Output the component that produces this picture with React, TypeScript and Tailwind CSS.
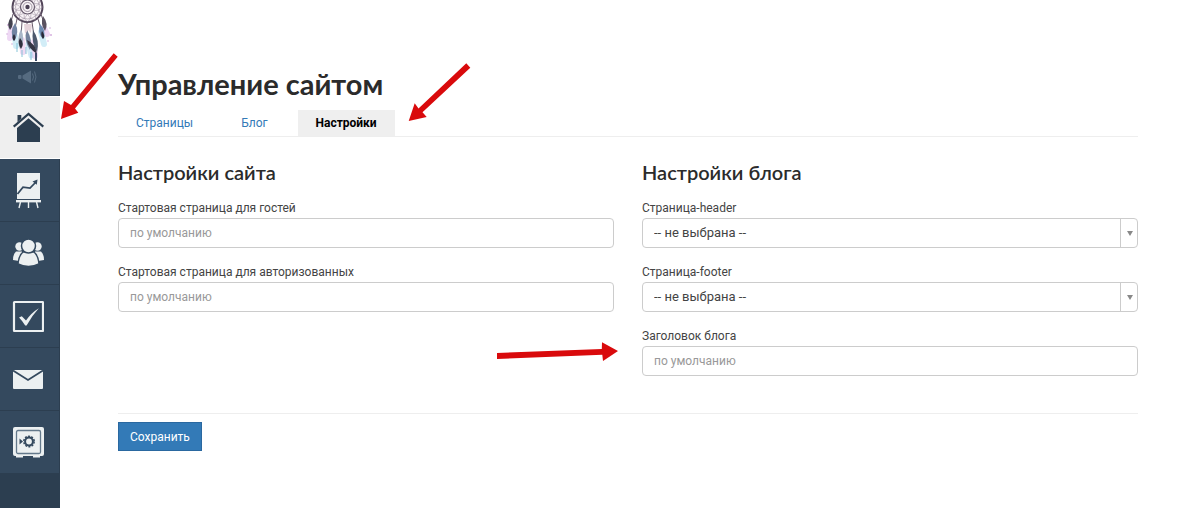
import { useState } from 'react';
import type { ReactNode } from 'react';

function Dreamcatcher() {
  const spokes = [0, 30, 60, 90, 120, 150, 180, 210, 240, 270, 300, 330];
  return (
    <svg viewBox="0 0 60 62" className="h-full w-full">
      <g fill="none" strokeLinecap="round">
        <path d="M11 29l-1 9M44 28l3 6" stroke="#cf8fe0" strokeWidth="6" opacity=".35" />
        <path d="M15 36l1 10M41 32l3 12" stroke="#8fd3ea" strokeWidth="6" opacity=".4" />
        <path d="M22 40l1 12M34 42l1 14" stroke="#d9a3e0" strokeWidth="6" opacity=".4" />
        <path d="M28 44l3 12" stroke="#8fc7ea" strokeWidth="5" opacity=".4" />
      </g>
      <g fill="#c58fd0" opacity=".7">
        <circle cx="8" cy="25" r="1" />
        <circle cx="7" cy="34" r=".8" />
        <circle cx="51" cy="35" r="1" />
        <circle cx="48" cy="41" r=".8" />
        <circle cx="50" cy="28" r=".8" />
        <circle cx="12" cy="44" r=".8" />
      </g>
      <circle cx="27.5" cy="7" r="15" fill="#f8f3f6" stroke="#53465a" strokeWidth="2" />
      <circle cx="27.5" cy="7" r="12" fill="none" stroke="#a598a8" strokeWidth=".7" />
      <circle cx="27.5" cy="7" r="7" fill="none" stroke="#5c5062" strokeWidth="1.2" />
      <circle cx="27.5" cy="7" r="4.5" fill="none" stroke="#8d8092" strokeWidth=".8" />
      <circle cx="27.5" cy="7" r="2.2" fill="#4a4053" />
      {spokes.map((deg) => (
        <path
          key={deg}
          d="M27.5 0L30.5 -4.5L27.5 -8L24.5 -4.5z"
          transform={`rotate(${deg} 27.5 7)`}
          fill="none"
          stroke="#9b8ea0"
          strokeWidth=".5"
        />
      ))}
      <path
        d="M13 14L11 22M17 19l-2 9M22 22l-1 14M27 23v15M32 22l2 14M38 19l3 10M41 14l3 9"
        stroke="#6b5d6d"
        strokeWidth="1"
        fill="none"
      />
      <path d="M11 17q-5 7-1 13q5-5 1-13z" fill="#43424f" />
      <path d="M15 23q-6 9-1 18q6-9 1-18z" fill="#7183a2" />
      <path d="M14 34q-3 4 0 7q3-3 0-7z" fill="#2c2c3c" />
      <path d="M43 16q-3 8 2 15q4-7-2-15z" fill="#5a5260" />
      <path d="M40 24q-3 9 3 15q4-8-3-15z" fill="#6d8bb0" />
      <path d="M42 31q-2 4 1 8q3-3-1-8z" fill="#292936" />
      <path d="M21 29q-5 10-1 20q6-9 1-20z" fill="#a9b7c8" />
      <path d="M20 38q-3 5 1 11q4-5-1-11z" fill="#30303f" />
      <path d="M27 30q-4 9 3 20q3-10-3-20z" fill="#74839c" />
      <path d="M33 30q-2 12 4 22q3-12-4-22z" fill="#4d596d" />
      <path d="M27 40q1 8 10 14q-1-10-10-14z" fill="#353544" />
      <path d="M24 24h8l-1 9-3-3-3 4z" fill="#e5d3da" />
      <path d="M22 50v7M26 47v7M31 52v8M17 43v9" stroke="#6cb7d0" strokeWidth="1" opacity=".8" />
      <path d="M36 53v8" stroke="#3c4a66" strokeWidth="2" />
    </svg>
  );
}

function HomeIcon() {
  return (
    <svg viewBox="0 0 32 32" className="size-8" fill="#2c3e50">
      <path d="M5.5 3h3.8v3.6L5.5 10z" />
      <path d="M1.7 14.6L16.5 2L31.3 14.6" fill="none" stroke="#2c3e50" strokeWidth="2.2" />
      <path d="M16.5 6.2L28 16v14H5V16z" />
    </svg>
  );
}

function ChartIcon() {
  return (
    <svg viewBox="0 0 32 32" className="size-8 overflow-visible">
      <path d="M5-1h23v26H5z" fill="#ecf0f1" />
      <path d="M4 26h25v2.4H4z" fill="#ecf0f1" />
      <path d="M8.5 28l-1.5 6M16.5 28v6M24.5 28l1.5 6" stroke="#ecf0f1" strokeWidth="1.4" />
      <path d="M5.5 20L11 13.2L18 14.2L24 8" fill="none" stroke="#34495e" strokeWidth="1.7" />
      <path d="M20.5 7.4L25.5 5.6L24.8 10.8z" fill="#34495e" />
    </svg>
  );
}

function PeopleIcon() {
  return (
    <svg viewBox="0 0 32 32" className="size-8" fill="#ecf0f1">
      <circle cx="7.5" cy="9.5" r="4.2" />
      <circle cx="25.5" cy="9.5" r="4.2" />
      <path d="M4 14.5h6v10L1 23q0-6 3-8.5z" />
      <path d="M29 14.5h-6v10l9-1.5q0-6-3-8.5z" />
      <path
        d="M11 15h11q4.5 4 5 12q-4.5 2.5-10.5 2.5t-10.5-2.5q.5-8 5-12z"
        stroke="#34495e"
        strokeWidth="1.5"
      />
      <circle cx="16.5" cy="9" r="7" stroke="#34495e" strokeWidth="1.5" />
    </svg>
  );
}

function CheckIcon() {
  return (
    <svg viewBox="0 0 32 32" className="size-8">
      <rect x="2" y="2" width="29" height="29" rx=".5" fill="none" stroke="#ecf0f1" strokeWidth="2.2" />
      <path d="M7 17.5l2.8-1.2 4.2 4.2Q19 13 26.8 8.2Q20 15.5 14.6 25.5h-1.4Q10.5 21 7 17.5z" fill="#ecf0f1" />
    </svg>
  );
}

function MailIcon() {
  return (
    <svg viewBox="0 0 32 32" className="size-8">
      <rect x="1" y="7" width="30" height="19" rx="1" fill="#ecf0f1" />
      <path d="M1 7.5L16 17L31 7.5" fill="none" stroke="#34495e" strokeWidth="1.8" />
    </svg>
  );
}

function SafeIcon() {
  return (
    <svg viewBox="0 0 32 32" className="size-8">
      <path d="M4 29h7v2.5H4zM21 29h7v2.5h-7z" fill="#ecf0f1" />
      <rect x="1" y="1" width="31" height="29" rx="2" fill="#ecf0f1" />
      <rect x="4.5" y="4.5" width="24" height="23" rx="1.5" fill="none" stroke="#64798b" strokeWidth="1.3" />
      <circle cx="17" cy="15.5" r="3.9" fill="none" stroke="#34495e" strokeWidth="2" />
      <circle cx="17" cy="15.5" r="5.2" fill="none" stroke="#34495e" strokeWidth="1.5" strokeDasharray="2 1.27" />
      <path d="M7.5 12.5l3.5 3-3.5 3z" fill="#34495e" />
    </svg>
  );
}

function SpeakerIcon() {
  return (
    <svg viewBox="0 0 20 14" className="h-[14px] w-5" fill="#566b80">
      <rect x="0" y="5" width="3.5" height="4" rx="1" />
      <path d="M4.5 5.5L13 .5v13L4.5 8.5z" />
      <path d="M14.5 3.5q2 3.5 0 7M16.5 1.5q3 5.5 0 11" fill="none" stroke="#566b80" strokeWidth="1" />
    </svg>
  );
}

const menu: { title: string; icon: ReactNode; active?: boolean }[] = [
  { title: 'Сайт', icon: <HomeIcon />, active: true },
  { title: 'Статистика', icon: <ChartIcon /> },
  { title: 'Контакты', icon: <PeopleIcon /> },
  { title: 'Задачи', icon: <CheckIcon /> },
  { title: 'Рассылки', icon: <MailIcon /> },
  { title: 'Магазин', icon: <SafeIcon /> },
];

function Sidebar() {
  return (
    <aside className="flex w-15 shrink-0 flex-col bg-[#2c3e50]">
      <a href="#" aria-label="Главная" className="block h-[62px] bg-white">
        <Dreamcatcher />
      </a>
      <button
        type="button"
        aria-label="Уведомления"
        className="flex h-[34px] items-center border-y border-r border-[#2c3e50] bg-[#34495e] pb-1 pl-[18px]"
      >
        <SpeakerIcon />
      </button>
      <nav>
        {menu.map((item) => (
          <a
            key={item.title}
            href="#"
            aria-label={item.title}
            className={
              item.active
                ? 'flex h-[63px] items-center border-y border-white bg-[#efefef] pl-3'
                : 'flex h-[63px] items-center border-r border-b border-[#2c3e50] bg-[#34495e] pl-3'
            }
          >
            {item.icon}
          </a>
        ))}
      </nav>
    </aside>
  );
}

function TextField({ id, label }: { id: string; label: string }) {
  return (
    <div className="mb-[14px]">
      <label htmlFor={id} className="block leading-5">
        {label}
      </label>
      <input
        id={id}
        type="text"
        placeholder="по умолчанию"
        className="block h-[30px] w-full rounded border border-[#ccc] bg-white px-[11px] outline-none placeholder:text-[#999]"
      />
    </div>
  );
}

function SelectField({ id, label }: { id: string; label: string }) {
  return (
    <div className="mb-[14px]">
      <label htmlFor={id} className="block leading-5">
        {label}
      </label>
      <div className="relative">
        <select
          id={id}
          className="block h-[30px] w-full appearance-none rounded border border-[#ccc] bg-white px-[11px] text-[13px] outline-none"
        >
          <option>-- не выбрана --</option>
        </select>
        <span className="pointer-events-none absolute inset-y-0 right-0 flex w-[18px] items-center justify-center border-l border-[#ccc]">
          <svg viewBox="0 0 6 5" className="h-[5px] w-[6px]">
            <path d="M0 0h6L3 5z" fill="#888" />
          </svg>
        </span>
      </div>
    </div>
  );
}

function Arrows() {
  return (
    <svg
      width="640"
      height="380"
      viewBox="0 0 640 380"
      fill="#d90a0c"
      className="pointer-events-none absolute top-0 left-0"
    >
      <path d="M113.7 53.3L117.7 56.7L75 108.5L78.3 112.7L61 119L64 101L71 105z" />
      <path d="M466.3 63.3L470.3 67.7L422.5 112.3L426.7 117L408.7 121L414.7 103.3L418.5 108.5z" />
      <path d="M497 353L601.8 349L602 342.3L618 351L603 361L602.3 354.7L497 359z" />
    </svg>
  );
}

const tabs = ['Страницы', 'Блог', 'Настройки'];

export default function App() {
  const [tab, setTab] = useState('Настройки');

  return (
    <div className="relative flex min-h-screen bg-white font-['Roboto','Noto_Sans',sans-serif] text-xs text-[#444]">
      <Sidebar />
      <main className="min-w-0 flex-1 pt-16 pr-[61px] pl-[58px]">
        <h1 className="font-['Lato','Roboto',sans-serif] text-[29px] leading-10 font-bold text-[#2b2b2b]">
          Управление сайтом
        </h1>

        <div className="mt-[6px] flex gap-3 border-b border-[#eee]">
          {tabs.map((name) => (
            <button
              key={name}
              type="button"
              onClick={() => setTab(name)}
              className={
                name === tab
                  ? 'h-[26px] bg-[#efefef] px-[18px] font-bold text-black'
                  : 'h-[26px] px-[18px] text-[#337ab7]'
              }
            >
              {name}
            </button>
          ))}
        </div>

        <form onSubmit={(e) => e.preventDefault()}>
          <div className="grid grid-cols-2 gap-7 pt-[19px]">
            <section>
              <h2 className="mb-[10px] font-['Lato','Roboto',sans-serif] text-xl leading-8 font-semibold text-[#2b2b2b]">
                Настройки сайта
              </h2>
              <TextField id="guest-page" label="Стартовая страница для гостей" />
              <TextField id="user-page" label="Стартовая страница для авторизованных" />
            </section>
            <section>
              <h2 className="mb-[10px] font-['Lato','Roboto',sans-serif] text-xl leading-8 font-semibold text-[#2b2b2b]">
                Настройки блога
              </h2>
              <SelectField id="page-header" label="Страница-header" />
              <SelectField id="page-footer" label="Страница-footer" />
              <TextField id="blog-title" label="Заголовок блога" />
            </section>
          </div>
          <hr className="mt-[23px] border-[#eee]" />
          <button
            type="submit"
            className="mt-2 h-[29px] border border-[#2a68a0] bg-[#337ab7] px-[11px] text-white"
          >
            Сохранить
          </button>
        </form>
      </main>
      <Arrows />
    </div>
  );
}
